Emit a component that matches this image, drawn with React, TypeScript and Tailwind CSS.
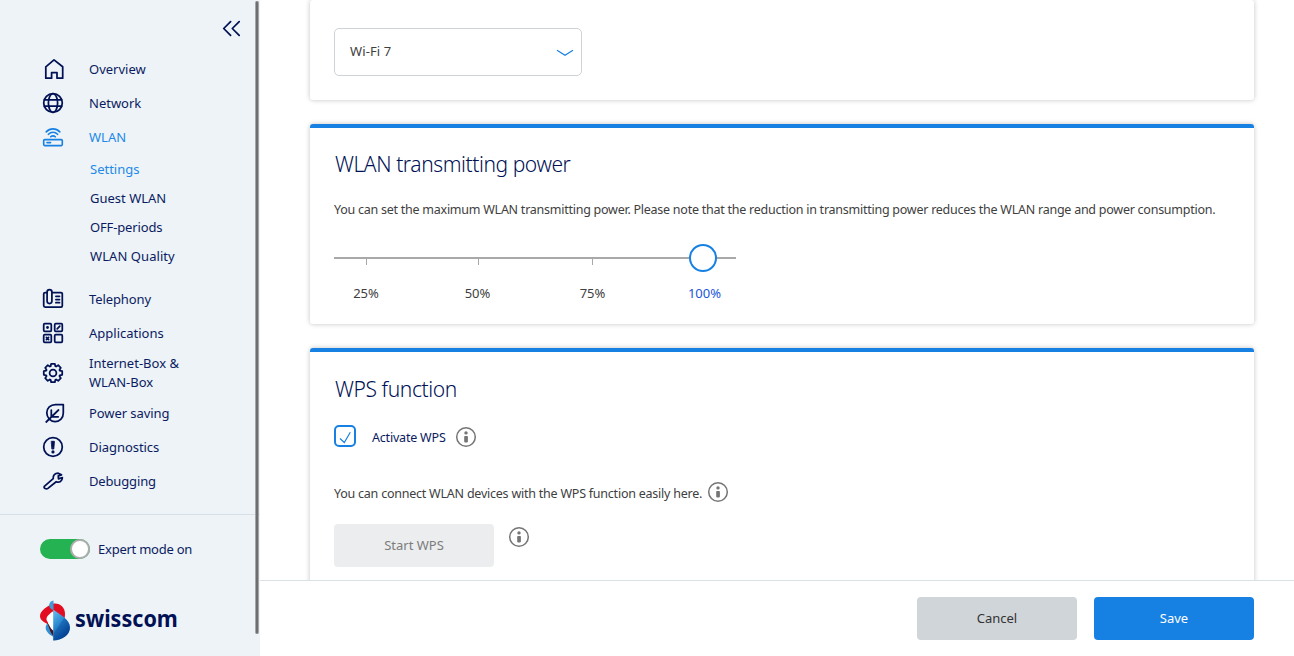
import type { ReactNode } from "react";

const icons: Record<string, ReactNode> = {
  home: <path d="M4.8 21.2V9.8L13 2.9l8.7 6.9v11.4h-5.7v-5.7h-5.4v5.7z" />,
  globe: (
    <>
      <circle cx="12" cy="12" r="9.3" />
      <ellipse cx="12" cy="12" rx="4.6" ry="9.3" />
      <path d="M3.4 8.9h17.2M3.4 15.1h17.2" />
    </>
  ),
  router: (
    <>
      <rect x="2.7" y="14.6" width="18.6" height="6" rx="1" />
      <path d="M6 17.6h3.6M5.2 6.9c3.8-4 9.8-4 13.6 0M7.4 9.3c2.6-2.7 6.6-2.7 9.2 0M9.7 11.8c1.3-1.3 3.3-1.3 4.6 0" />
    </>
  ),
  phone: (
    <>
      <path d="M6.2 5.500H4.200a1.500 1.500 0 0 0-1.500 1.500v11.500a1.500 1.500 0 0 0 1.500 1.500H20a1.300 1.300 0 0 0 1.300-1.300V6.800A1.300 1.300 0 0 0 20 5.500h-8.900" />
      <rect x="6.100" y="2.600" width="4.800" height="13.900" rx="2.400" />
      <path d="M14.900 9.300h3.600M14.900 12.500h3.600M14.900 15.700h3.600" />
    </>
  ),
  apps: (
    <>
      <rect x="2.700" y="2.700" width="7.600" height="7.600" rx="1" />
      <rect x="13.700" y="2.700" width="7.600" height="7.600" rx="1" />
      <rect x="2.700" y="13.700" width="7.600" height="7.600" rx="1" />
      <rect x="13.700" y="13.700" width="7.600" height="7.600" rx="1" />
      <circle cx="6.500" cy="6.500" r="1.400" fill="currentColor" stroke="none" />
      <path d="M16.200 7.800l2.600-2.600M5.400 16.400l2.200 2.200M7.600 16.400l-2.200 2.200" />
    </>
  ),
  gear: (
    <>
      <circle cx="12" cy="12" r="3.400" />
      <path d="M10.160 2.780L13.840 2.780L14.370 5.270L15.080 5.560L17.220 4.180L19.820 6.780L18.440 8.920L18.730 9.630L21.220 10.160L21.220 13.840L18.730 14.370L18.440 15.080L19.820 17.220L17.220 19.820L15.080 18.440L14.370 18.730L13.840 21.220L10.160 21.220L9.630 18.730L8.920 18.440L6.780 19.820L4.180 17.220L5.560 15.080L5.270 14.370L2.780 13.840L2.780 10.160L5.270 9.630L5.560 8.920L4.180 6.780L6.780 4.180L8.920 5.560L9.630 5.270Z" />
    </>
  ),
  leaf: (
    <>
      <path d="M22.300 3.500H14.400C9.500 3.500 5.800 7.200 5.800 11.800c0 5 3.800 8.700 8.300 8.700 4.800 0 8.200-3.700 8.200-8.600z" />
      <path d="M5.200 21l12.300-12M10.300 9v6.800h6.900" />
    </>
  ),
  alert: (
    <>
      <circle cx="12" cy="12" r="9.300" />
      <path d="M10.600 6.300h2.800l-.6 7.700h-1.600z" fill="currentColor" strokeWidth=".9" />
      <circle cx="12" cy="16.900" r="1.600" fill="currentColor" stroke="none" />
    </>
  ),
  wrench: (
    <path d="M3.300 17.400L12.200 9.700C11.800 6.300 14 4.200 17.200 4.200L20.500 5.800 17.300 6.900 17.500 9.900 21.400 8.700C21.300 12.100 18.400 14 15.200 12.700L6.900 19.400C5.400 20.500 2.200 19.400 3.300 17.400z" />
  ),
};

function Icon({ name }: { name: string }) {
  return (
    <svg
      viewBox="0 0 24 24"
      className="h-6 w-6 shrink-0"
      fill="none"
      stroke="currentColor"
      strokeWidth={name === "router" ? 1.6 : 1.75}
      strokeLinecap="round"
      strokeLinejoin="round"
    >
      {icons[name]}
    </svg>
  );
}

function NavItem({ icon, children, active, tall }: { icon: string; children: ReactNode; active?: boolean; tall?: boolean }) {
  return (
    <a
      className={`flex items-center gap-6 pl-[41px] leading-[19px] ${tall ? "h-[46px]" : "h-[34px]"} ${active ? "text-[#1781e3]" : ""}`}
    >
      <Icon name={icon} />
      <span className={active ? "text-[#2389e8]" : "text-[#0b1b62]"}>{children}</span>
    </a>
  );
}

function Info({ className = "" }: { className?: string }) {
  return (
    <svg viewBox="0 0 22 22" className={`h-[22px] w-[22px] shrink-0 ${className}`} fill="none">
      <circle cx="11" cy="11" r="9.300" stroke="#757575" strokeWidth="1.500" />
      <circle cx="11" cy="6.900" r="1.700" fill="#757575" />
      <rect x="9.200" y="10" width="3.700" height="6.400" rx=".8" fill="#757575" />
    </svg>
  );
}

function Logo() {
  return (
    <svg viewBox="0 0 140 44" className="ml-10 mt-[41px] h-11 w-[140px] overflow-visible">
      <defs>
        <linearGradient id="wing" x1="0" y1="0" x2=".5" y2="1">
          <stop offset="0" stopColor="#6fc0ee" />
          <stop offset=".45" stopColor="#2f8dd3" />
          <stop offset="1" stopColor="#00408f" />
        </linearGradient>
      </defs>
      <path d="M12 4C19 2 25 7 25 14c0 3-.5 5.500-2 7L12 12z" fill="#e30d22" />
      <path d="M13.500 4C7 5.500 0 11 0 16c0 4.500 4.500 6 8 8.500C8 20 10 15 13.500 12z" fill="#e30d22" />
      <path d="M13.500 11C9.500 13.500 6 17 6.500 19.500c.5 2.500 4.500 7 7 14z" fill="#fff" />
      <path d="M7.500 23.500C5.200 25.500 5.200 29 7 31.500c1.500 2.500 4 4 6.500 5.500z" fill="#2f8fd4" />
      <path d="M7.500 22.500c.3 3 1.800 5.500 2.700 8.500 1 2 2 4 3.300 5.500V31l-2.500-2.500z" fill="#4b1016" />
      <path d="M13.200 9.500C19 14 30 19 30 27.500 30 35 22 40.500 13.200 40.500z" fill="url(#wing)" />
      <path d="M13.500 34l10.500-16C28 21 30 24 30 27.500 30 35 22 40 13.500 40.500z" fill="#003c96" opacity=".3" />
      <path d="M9.300 4.500C9.800 1.500 11.500 1 13.500.5v9.500C10.500 9 9 7.500 9.300 4.500z" fill="#3e9ad8" />
      <text
        x="34.900"
        y="26.800"
        textLength="103"
        lengthAdjust="spacingAndGlyphs"
        className="font-['Noto_Sans',sans-serif] text-[22.500px] font-bold"
        fill="#001155"
      >
        swisscom
      </text>
    </svg>
  );
}

const cardShadow = "rounded-[3px] bg-white shadow-[0_0_5px_rgba(0,0,0,0.24)]";

export default function App() {
  return (
    <div className="flex h-[656px] w-[1294px] overflow-hidden bg-white font-['Noto_Sans',sans-serif] text-[13px] text-[#404040]">
      <aside className="flex w-[260px] shrink-0 bg-[#edf3f6] text-[#001155]">
        <div className="flex w-[255px] flex-col">
          <div className="flex h-[52px] justify-end pr-3.5 pt-[18px]">
            <svg viewBox="0 0 20 20" className="h-5 w-5" fill="none" stroke="currentColor" strokeWidth="1.750" strokeLinecap="round" strokeLinejoin="round">
              <path d="M9.600 3.600L2.700 10.500l6.900 6.900M18.200 3.600l-6.900 6.900 6.900 6.900" />
            </svg>
          </div>
          <nav className="flex flex-col">
            <NavItem icon="home">Overview</NavItem>
            <NavItem icon="globe">Network</NavItem>
            <NavItem icon="router" active>WLAN</NavItem>
            <div className="flex h-32 flex-col pl-[90px] pt-px leading-[29px] text-[#0b1b62]">
              <a className="text-[#2389e8]">Settings</a>
              <a>Guest WLAN</a>
              <a className="tracking-[-0.15px]">OFF-periods</a>
              <a className="tracking-[0.07px]">WLAN Quality</a>
            </div>
            <NavItem icon="phone"><span className="tracking-[-0.1px]">Telephony</span></NavItem>
            <NavItem icon="apps">Applications</NavItem>
            <NavItem icon="gear" tall>Internet-Box &amp;<br />WLAN-Box</NavItem>
            <NavItem icon="leaf"><span className="tracking-[-0.08px]">Power saving</span></NavItem>
            <NavItem icon="alert"><span className="tracking-[-0.05px]">Diagnostics</span></NavItem>
            <NavItem icon="wrench"><span className="tracking-[-0.15px]">Debugging</span></NavItem>
          </nav>
          <div className="mt-4 w-[260px] border-t border-[#d6e0e6]" />
          <div className="ml-10 mt-6 flex h-5 items-center gap-2">
            <div className="flex h-5 w-[50px] justify-end rounded-full bg-[#25b252]">
              <div className="h-5 w-5 rounded-full border-2 border-[#adadad] bg-white" />
            </div>
            <span className="pt-0.5 tracking-[-0.24px] text-[#0b1b62]">Expert mode on</span>
          </div>
          <Logo />
        </div>
        <div className="relative mt-px h-[633px] w-1 rounded-full border-x border-[#a3a6a7] bg-[#6e6e6e]" />
      </aside>

      <main className="flex min-w-0 flex-1 flex-col">
        <div className="flex h-[580px] flex-col gap-6 overflow-hidden pl-[50px] pr-10">
          <section className={`h-[100px] shrink-0 px-6 pt-7 ${cardShadow}`}>
            <div className="flex h-12 w-[248px] items-center justify-between rounded-[5px] border border-[#d0d3d6] pl-[15px] pr-[7px]">
              <span className="tracking-[0.1px]">Wi-Fi 7</span>
              <svg viewBox="0 0 18 8" className="mt-px h-2 w-[18px]" fill="none" stroke="#1781e3" strokeWidth="1.200">
                <path d="M1 1.300l8 5 8-5" />
              </svg>
            </div>
          </section>

          <section className={`h-[200px] shrink-0 border-t-4 border-[#1781e3] px-6 ${cardShadow}`}>
            <h2 className="pl-px pt-5 text-[21px] font-light leading-8 tracking-[-0.42px] text-[#001155]">WLAN transmitting power</h2>
            <p className="mt-5 whitespace-nowrap text-[12.500px] leading-5 tracking-[-0.25px]">
              You can set the maximum WLAN transmitting power. Please note that the reduction in transmitting power reduces the WLAN range and power consumption.
            </p>
            <div className="relative mt-[37px] h-0.5 w-[402px] bg-[#a8a8a8]">
              <div className="absolute left-8 top-0.5 h-1.5 w-px bg-[#a8a8a8]" />
              <div className="absolute left-36 top-0.5 h-1.5 w-px bg-[#a8a8a8]" />
              <div className="absolute left-[258px] top-0.5 h-1.5 w-px bg-[#a8a8a8]" />
              <div className="absolute -top-[13px] left-[355px] h-7 w-7 rounded-full border-2 border-[#1781e3] bg-white" />
            </div>
            <div className="mt-6 flex leading-5">
              <span className="w-16 text-center">25%</span>
              <span className="w-[159px] text-center">50%</span>
              <span className="w-[71px] text-center">75%</span>
              <span className="w-[153px] text-center text-[#1a56db]">100%</span>
            </div>
          </section>

          <section className={`h-[260px] shrink-0 border-t-4 border-[#1781e3] px-6 ${cardShadow}`}>
            <h2 className="pl-px pt-[21px] text-[21px] font-light leading-8 tracking-[-0.4px] text-[#001155]">WPS function</h2>
            <div className="mt-5 flex">
              <div className="flex h-[22px] w-[22px] items-center justify-center rounded-[5px] border-2 border-[#1781e3]">
                <svg viewBox="0 0 18 18" className="h-[18px] w-[18px] shrink-0" fill="none" stroke="#1781e3" strokeWidth="1.200">
                  <path d="M4 11.500l4.300 4L14.300 5.300" />
                </svg>
              </div>
              <span className="ml-4 pt-[3px] text-[12.500px] leading-5 tracking-[-0.2px] text-[#0b1b62]">Activate WPS</span>
              <Info className="ml-[9px] mt-px" />
            </div>
            <div className="mt-[33px] flex h-[22px]">
              <p className="whitespace-nowrap pt-[3px] text-[12.500px] leading-5 tracking-[-0.23px]">You can connect WLAN devices with the WPS function easily here.</p>
              <Info className="ml-[5px]" />
            </div>
            <div className="mt-[21px] flex">
              <button className="h-[43px] w-40 rounded bg-[#ebedef] text-[#7c7c7c]">Start WPS</button>
              <Info className="ml-3.5 mt-0.5" />
            </div>
          </section>
        </div>
        <footer className="flex h-[76px] justify-end gap-[17px] border-t border-[#d9e2e7] bg-white pr-10 pt-4">
          <button className="h-[43px] w-40 rounded bg-[#d0d5d9] text-[#333]">Cancel</button>
          <button className="h-[43px] w-40 rounded bg-[#1781e3] text-white">Save</button>
        </footer>
      </main>
    </div>
  );
}
